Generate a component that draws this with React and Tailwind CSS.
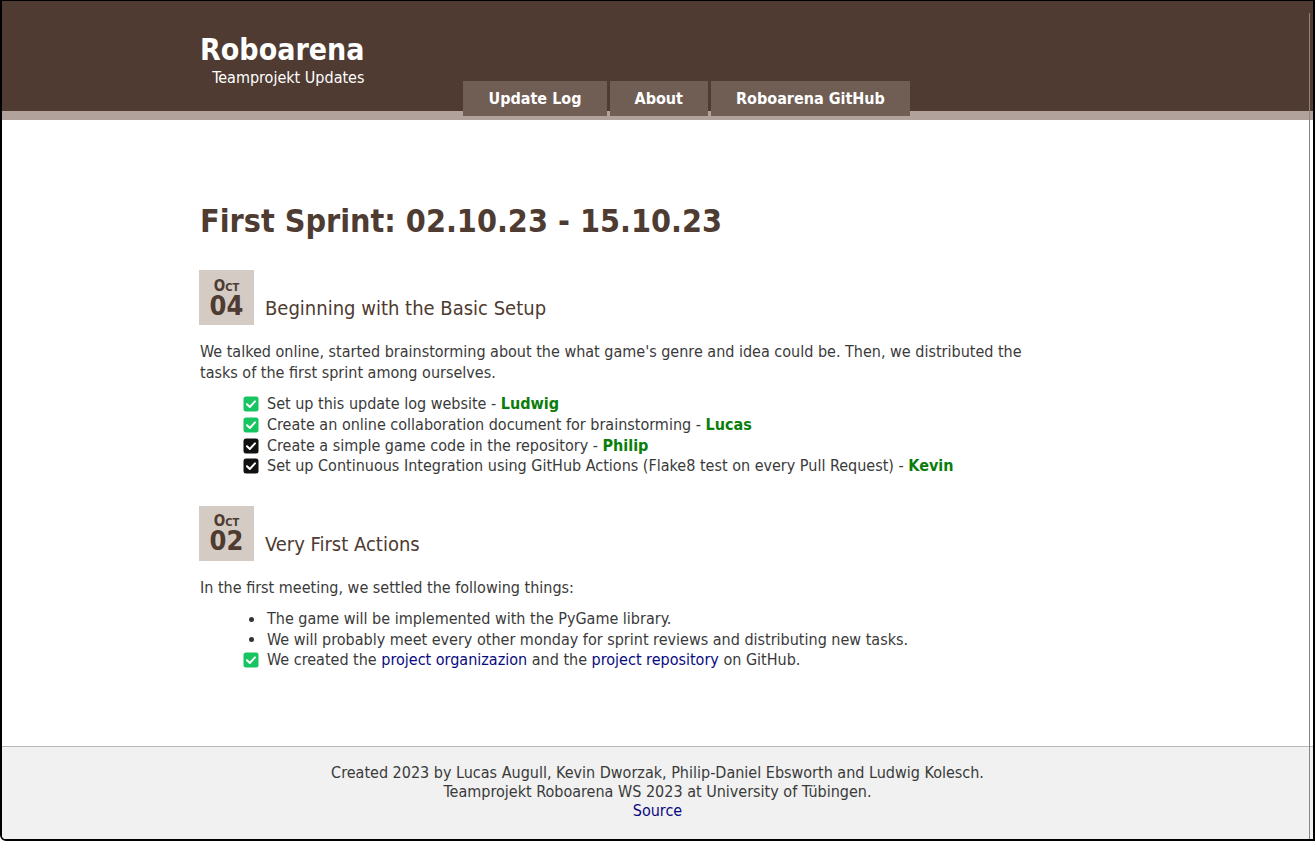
import React from "react";

const FONT = { fontFamily: '"DejaVu Sans Condensed", "DejaVu Sans", Verdana, sans-serif' };

function Check({ green }) {
  return (
    <svg viewBox="0 0 16 16" className="w-4 h-4 shrink-0">
      <rect x="0.5" y="0.5" width="15" height="15" rx="2.5" fill={green ? "#16c460" : "#111"} />
      <path d="M4 8.2 L6.8 11 L12 5.4" fill="none" stroke="#fff" strokeWidth="2" strokeLinecap="round" strokeLinejoin="round" />
    </svg>
  );
}

function DateBox({ month, day }) {
  return (
    <div className="w-[55px] h-[55px] bg-[#d5cbc5] flex flex-col items-center justify-center text-[#4e3b31] font-bold shrink-0">
      <span className="text-[15px] leading-[13px] [font-variant-caps:small-caps]">{month}</span>
      <span className="text-[27px] leading-[20px] mt-[3px]">{day}</span>
    </div>
  );
}

function Item({ icon, children }) {
  return (
    <li className="flex items-center h-[20.7px]">
      <span className="w-[24px] flex justify-start">{icon}</span>
      <span>{children}</span>
    </li>
  );
}

const Bullet = () => <span className="w-[16px] flex justify-center"><span className="w-[5px] h-[5px] rounded-full bg-[#333]" /></span>;

const Name = ({ children }) => <b className="text-[#0a7d0a]">{children}</b>;

export default function App() {
  return (
    <div style={FONT} className="w-[1315px] h-[841px] border-t border-r-2 border-b-2 border-l-2 border-black rounded-bl-[6px] overflow-hidden flex flex-col bg-white text-[#3a3a3a] relative">
      <header>
        <div className="h-[110px] bg-[#4f3b31]">
          <div className="w-[915px] mx-auto h-full flex items-end">
            <div className="text-right text-white self-start mt-[32px]">
              <div className="text-[30px] font-bold leading-[34px]">Roboarena</div>
              <div className="text-[16px] leading-[20px] mt-[1px]">Teamprojekt Updates</div>
            </div>
            <nav className="flex gap-[3px] ml-[99px] -mb-[5px] relative z-10">
              {["Update Log", "About", "Roboarena GitHub"].map((t) => (
                <a key={t} className="h-[35px] px-[25px] bg-[#705d54] text-white font-bold text-[16px] flex items-center">
                  {t}
                </a>
              ))}
            </nav>
          </div>
        </div>
        <div className="h-[9px] bg-[#b1a39c]" />
      </header>

      <main className="flex-1">
        <div className="w-[915px] mx-auto pt-[83px]">
          <h1 className="text-[32px] font-bold text-[#4e3b31] leading-[36px]">First Sprint: 02.10.23 - 15.10.23</h1>

          <div className="flex items-end gap-[11px] mt-[31px] -ml-[1px]">
            <DateBox month="Oct" day="04" />
            <h2 className="text-[20px] text-[#4e3b31] leading-[24px] mb-[5px]">Beginning with the Basic Setup</h2>
          </div>
          <p className="text-[16px] leading-[21px] mt-[16px] w-[830px]">
            We talked online, started brainstorming about the what game's genre and idea could be. Then, we distributed the tasks of the first sprint among ourselves.
          </p>
          <ul className="text-[16px] mt-[11px] ml-[43px]">
            <Item icon={<Check green />}>Set up this update log website - <Name>Ludwig</Name></Item>
            <Item icon={<Check green />}>Create an online collaboration document for brainstorming - <Name>Lucas</Name></Item>
            <Item icon={<Check />}>Create a simple game code in the repository - <Name>Philip</Name></Item>
            <Item icon={<Check />}>Set up Continuous Integration using GitHub Actions (Flake8 test on every Pull Request) - <Name>Kevin</Name></Item>
          </ul>

          <div className="flex items-end gap-[11px] mt-[29px] -ml-[1px]">
            <DateBox month="Oct" day="02" />
            <h2 className="text-[20px] text-[#4e3b31] leading-[24px] mb-[5px]">Very First Actions</h2>
          </div>
          <p className="text-[16px] leading-[21px] mt-[16px]">In the first meeting, we settled the following things:</p>
          <ul className="text-[16px] mt-[11px] ml-[43px]">
            <Item icon={<Bullet />}>The game will be implemented with the PyGame library.</Item>
            <Item icon={<Bullet />}>We will probably meet every other monday for sprint reviews and distributing new tasks.</Item>
            <Item icon={<Check green />}>
              We created the <a className="text-[#0a0a80]">project organizazion</a> and the <a className="text-[#0a0a80]">project repository</a> on GitHub.
            </Item>
          </ul>
        </div>
      </main>

      <footer className="h-[93px] bg-[#f0f1f0] border-t border-[#b8b8b8] text-center text-[16px] leading-[19px] pt-[16px]">
        <div>Created 2023 by Lucas Augull, Kevin Dworzak, Philip-Daniel Ebsworth and Ludwig Kolesch.</div>
        <div>Teamprojekt Roboarena WS 2023 at University of Tübingen.</div>
        <a className="text-[#0a0a80]">Source</a>
      </footer>

      <div className="absolute right-[3px] top-[12px] bottom-0 w-[1px] bg-[#8f8580]" />
    </div>
  );
}
